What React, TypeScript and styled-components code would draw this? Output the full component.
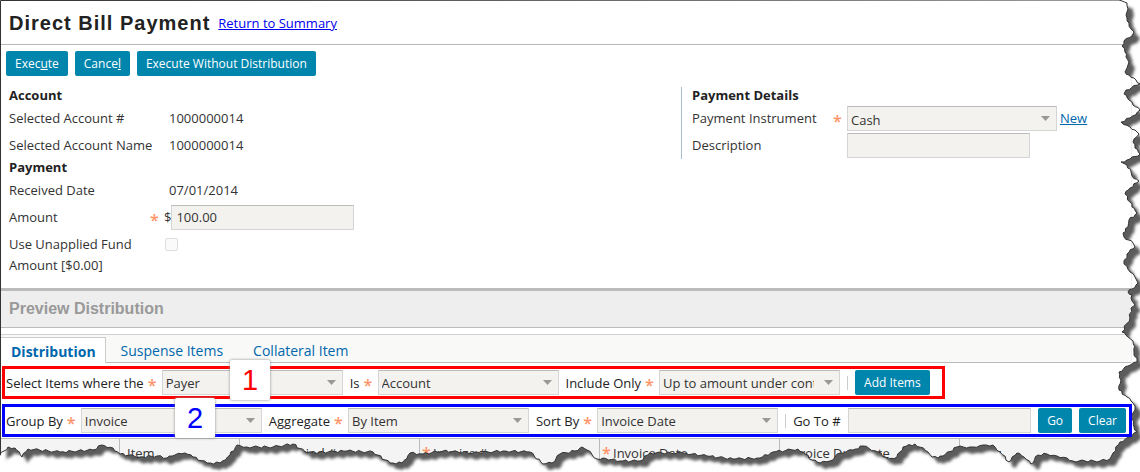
import React from 'react';
import styled, { createGlobalStyle, css } from 'styled-components';

const GlobalStyle = createGlobalStyle`
  * { box-sizing: border-box; }
  body {
    margin: 0;
    background: #fff;
    color: #333;
    font: 13px/20px "Open Sans", sans-serif;
  }
`;

const Page = styled.main`
  position: relative;
  overflow: hidden;
  padding: 1px 8px 0 1px;
`;

const Content = styled.div`
  border-right: 1px solid #eee;
`;

const Header = styled.header`
  display: flex;
  align-items: center;
  gap: 8px;
  height: 44px;
  padding-left: 8px;
  border-bottom: 1px solid #b7b7b7;
`;

const Title = styled.h1`
  margin: 0;
  font: bold 20px/24px "Liberation Sans", sans-serif;
  letter-spacing: 1px;
  color: #222;
`;

const SummaryLink = styled.a`
  color: #00e;
`;

const NewLink = styled.a`
  margin-left: 3px;
  color: #0067ac;
`;

const Actions = styled.div`
  display: flex;
  gap: 7px;
  padding: 6px 5px 11px;
`;

const Button = styled.button`
  flex: none;
  height: 25px;
  padding: 0 9px;
  border: 0;
  border-radius: 2px;
  background: #0085ad;
  color: #fff;
  font: 12px/24px "Open Sans", sans-serif;
`;

const Details = styled.div`
  display: grid;
  grid-template-columns: 680px 1fr;
  align-items: start;
  padding-bottom: 12px;
`;

const Column = styled.section<{ $divided?: boolean }>`
  ${p => p.$divided && css`
    border-left: 1px solid #a9bdd3;
  `}
  padding-left: ${p => (p.$divided ? 10 : 8)}px;
`;

const Heading = styled.h2`
  margin: 0;
  padding-bottom: 2px;
  font-size: 13px;
  line-height: 16px;
  color: #222;
`;

const Field = styled.div<{ $labelWidth: number }>`
  display: grid;
  grid-template-columns: ${p => p.$labelWidth}px 1fr;
  min-height: 27px;
  line-height: 27px;
`;

const FieldLabel = styled.label<{ $wrap?: boolean }>`
  white-space: nowrap;
  ${p => p.$wrap && css`
    width: 130px;
    line-height: 21px;
    padding-top: 3px;
    white-space: normal;
  `}
`;

const FieldName = styled.span`
  white-space: nowrap;
`;

const Value = styled.div<{ $indent?: boolean }>`
  display: flex;
  align-items: center;
  height: 27px;
  padding-left: ${p => (p.$indent ? 20 : 0)}px;
`;

const Star = styled.span`
  flex: none;
  width: 14px;
  padding-top: 5px;
  color: #ff9368;
  font-size: 16px;
  font-weight: 600;
  line-height: 16px;
`;

const control = css`
  height: 25px;
  border: 1px solid #d5d5d5;
  border-top-color: #bbb;
  border-radius: 0;
  background: #f3f2ee;
  color: #333;
  font: inherit;
  outline: 0;
`;

const TextBox = styled.input<{ $width: number }>`
  ${control}
  flex: none;
  width: ${p => p.$width}px;
  padding: 0 4px;
`;

const SelectFrame = styled.span<{ $width: number }>`
  position: relative;
  flex: none;
  display: block;
  width: ${p => p.$width}px;
  height: 25px;
`;

const Select = styled.select`
  ${control}
  display: block;
  appearance: none;
  width: 100%;
  padding: 0 25px 0 3px;
`;

const Arrow = styled.svg`
  position: absolute;
  top: 10px;
  right: 7px;
  width: 9px;
  height: 5px;
  fill: #999;
  pointer-events: none;
`;

const Tick = styled.input`
  appearance: none;
  width: 13px;
  height: 13px;
  margin: 0;
  border: 1px solid #ddd;
  border-radius: 2px;
  background: #fafafa;
`;

const Band = styled.h2`
  margin: 0 0 6px;
  height: 40px;
  padding: 2px 0 0 8px;
  border-top: 3px solid #bbb;
  border-bottom: 1px solid #bbb;
  background: #eee;
  color: #999;
  font: bold 16px/32px "Liberation Sans", sans-serif;
`;

const Tabs = styled.nav`
  display: flex;
  align-items: flex-end;
  height: 29px;
  border-top: 1px solid #d0d0d0;
  border-bottom: 1px solid #bbb;
  background: #f9f9f7;
`;

const Tab = styled.button<{ $active?: boolean }>`
  height: 26px;
  padding: 3px 15px 0;
  border: 0;
  background: none;
  color: #0067ac;
  font: 14px/23px "Open Sans", sans-serif;
  ${p => p.$active && css`
    position: relative;
    margin-bottom: -1px;
    padding: 2px 9px 0 10px;
    border: solid #ccc;
    border-width: 1px 1px 0 0;
    background: #fff;
    font-weight: bold;
  `}
`;

const Filters = styled.div`
  display: flex;
  flex-direction: column;
  gap: 5px;
  padding: 3px 0 1px 1px;
  margin-right: -1px;
`;

const FilterRow = styled.div<{ $color: string; $fit?: boolean }>`
  position: relative;
  z-index: 2;
  display: flex;
  align-items: center;
  align-self: ${p => (p.$fit ? 'flex-start' : 'stretch')};
  height: 33px;
  padding: 0 ${p => (p.$fit ? 12 : 3)}px 0 1px;
  border: 3px solid ${p => p.$color};
  white-space: nowrap;
  color: #222;
`;

const FilterItem = styled.label`
  display: flex;
  align-items: center;
  gap: 2px;
  margin-right: 7px;
`;

const FilterStar = styled(Star)`
  padding-left: 2px;
`;

const Separator = styled.span`
  width: 1px;
  height: 14px;
  margin-right: 7px;
  background: #ccc;
`;

const GoTo = styled.label`
  display: flex;
  flex: 1;
  align-items: center;
  gap: 7px;
  margin-right: 7px;
  input { flex: 1; width: 0; min-width: 0; }
`;

const ButtonPair = styled.span`
  display: flex;
  gap: 7px;
`;

const Marker = styled.span<{ $left: number; $color: string }>`
  position: absolute;
  top: -9px;
  left: ${p => p.$left}px;
  width: 40px;
  height: 40px;
  border-radius: 2px;
  background: #fff;
  box-shadow: 0 0 3px #888;
  color: ${p => p.$color};
  font: 29px/40px "Liberation Sans", sans-serif;
  text-align: center;
`;

const Table = styled.table`
  width: 100%;
  table-layout: fixed;
  border-collapse: separate;
  border-spacing: 0;
  border-top: 1px solid #bbb;
  background: #f4f4f4;
  th {
    height: 33px;
    padding: 4px 0 0 7px;
    vertical-align: top;
    text-align: left;
    font-weight: normal;
    border-left: 1px solid #bbb;
    white-space: nowrap;
  }
  th:first-child { border-left: 0; }
`;

const HeadCell = styled.span`
  display: flex;
`;

const HeadStar = styled(Star)`
  width: 11px;
  margin-left: -5px;
  padding-top: 2px;
`;

const Torn = styled.svg`
  position: absolute;
  inset: 0;
  width: 100%;
  height: 100%;
  pointer-events: none;
`;

const RIGHT_EDGE = [
  [1119, 0], [1122, 1], [1127, 3], [1127, 18], [1129, 23], [1131, 29], [1134, 32], [1132, 36], [1124, 41], [1122, 46],
  [1125, 52], [1126, 57], [1129, 62], [1127, 68], [1125, 72], [1129, 75], [1134, 78], [1140, 84], [1126, 90], [1124, 94],
  [1129, 100], [1133, 105], [1140, 110], [1130, 118], [1121, 122], [1130, 127], [1135, 130], [1139, 134], [1133, 142],
  [1135, 148], [1140, 154], [1130, 159], [1121, 162], [1127, 165], [1131, 172], [1132, 176], [1139, 181], [1130, 188],
  [1125, 194], [1130, 202], [1132, 207], [1137, 213], [1129, 220], [1128, 227], [1123, 233], [1124, 237], [1133, 243],
  [1135, 247], [1127, 254], [1124, 264], [1130, 272], [1135, 277], [1138, 283], [1132, 289], [1128, 292], [1132, 295],
  [1132, 301], [1135, 305], [1131, 308], [1130, 318], [1122, 332], [1128, 337], [1133, 341], [1134, 352], [1137, 362],
  [1128, 366], [1119, 372], [1121, 380], [1119, 390], [1127, 397], [1133, 403], [1135, 410], [1131, 416], [1134, 427],
  [1137, 432], [1130, 437], [1120, 442], [1113, 453], [1110, 459],
];

const BOTTOM_EDGE = [
  [1100, 461], [1073, 461], [1067, 458], [1057, 456], [1047, 454], [1038, 455], [1031, 464], [1024, 457], [1017, 453],
  [1009, 462], [1000, 452], [993, 445], [983, 445], [973, 447], [957, 447], [943, 456], [938, 458], [932, 457], [928, 452],
  [915, 444], [903, 447], [897, 457], [888, 459], [878, 452], [863, 446], [853, 450], [840, 453], [830, 461], [820, 463],
  [812, 460], [803, 452], [798, 449], [773, 452], [760, 458], [733, 459], [707, 456], [683, 453], [650, 453], [640, 461],
  [620, 461], [603, 458], [597, 459], [587, 450], [582, 447], [575, 451], [560, 454], [552, 463], [543, 464], [530, 452],
  [503, 451], [473, 453], [443, 451], [423, 454], [410, 453], [402, 463], [390, 463], [373, 452], [347, 451], [307, 453],
  [293, 444], [273, 447], [247, 447], [237, 445], [230, 455], [220, 463], [207, 463], [193, 457], [185, 453], [175, 455],
  [167, 458], [157, 456], [140, 457], [120, 454], [113, 448], [102, 445], [93, 450], [60, 452], [28, 449], [22, 457],
  [15, 448], [8, 447], [0, 455],
];

// Breaks each long stretch into short steps with a small repeating wobble, as torn paper has.
const WOBBLE = [1, -1, 0, 1, 0, -1, 1, 0, -1, 0];
const roughen = (points: number[][]) =>
  points
    .flatMap((point, i) => {
      const next = points[i + 1];
      if (!next) return [point];
      const dx = next[0] - point[0];
      const dy = next[1] - point[1];
      const length = Math.hypot(dx, dy);
      const steps = Math.max(1, Math.round(length / 3));
      return Array.from({ length: steps }, (_, s) => {
        const off = s ? WOBBLE[(i * 3 + s) % WOBBLE.length] : 0;
        return [point[0] + (dx * s) / steps - (dy / length) * off, point[1] + (dy * s) / steps + (dx / length) * off];
      });
    })
    .map(([x, y]) => `${x.toFixed(1)},${y.toFixed(1)}`)
    .join(' L');

const SHEET = `M0.5,0.5 L${roughen([...RIGHT_EDGE, ...BOTTOM_EDGE])} L0.5,455 Z`;

const TornEdge = () => (
  <Torn viewBox="0 0 1140 472" preserveAspectRatio="none" aria-hidden="true">
    <defs>
      <mask id="outside" maskUnits="userSpaceOnUse" x="0" y="0" width="1140" height="472">
        <rect width="1140" height="472" fill="#fff" />
        <path d={SHEET} fill="#000" />
      </mask>
      <filter id="soften" x="-5%" y="-5%" width="110%" height="110%">
        <feGaussianBlur stdDeviation="1.5" />
      </filter>
    </defs>
    <g mask="url(#outside)">
      <rect width="1140" height="472" fill="#fff" />
      <path d={SHEET} transform="translate(6 6)" fill="#5c5c5c" filter="url(#soften)" />
    </g>
    <path d={SHEET} fill="none" stroke="#333" strokeWidth="1" />
  </Torn>
);

const Dropdown = ({ id, value, width }: { id: string; value: string; width: number }) => (
  <SelectFrame $width={width}>
    <Select id={id} defaultValue={value}>
      <option>{value}</option>
    </Select>
    <Arrow viewBox="0 0 9 5"><path d="M0 0H9L4.5 5Z" /></Arrow>
  </SelectFrame>
);

const Filter = ({ id, label, value }: { id: string; label: string; value: string }) => (
  <FilterItem htmlFor={id}>
    <span>{label}</span>
    <FilterStar>*</FilterStar>
    <Dropdown id={id} value={value} width={181} />
  </FilterItem>
);

const COLUMNS = [
  { label: '', width: 118 },
  { label: 'Item', width: 120 },
  { label: 'Policy Period #', width: 180 },
  { label: 'Invoice #', width: 180, required: true },
  { label: 'Invoice Date', width: 180, required: true },
  { label: 'Invoice Due Date', width: 180 },
  { label: 'Payer' },
];

export default function App() {
  return (
    <>
      <GlobalStyle />
      <Page>
        <Content>
          <Header>
            <Title>Direct Bill Payment</Title>
            <SummaryLink href="#summary">Return to Summary</SummaryLink>
          </Header>
          <Actions>
            <Button>Exec<u>u</u>te</Button>
            <Button>Cance<u>l</u></Button>
            <Button>Execute Without Distribution</Button>
          </Actions>
          <Details>
            <Column>
              <Heading>Account</Heading>
              <Field $labelWidth={140}>
                <FieldName>Selected Account #</FieldName>
                <Value $indent>1000000014</Value>
              </Field>
              <Field $labelWidth={140}>
                <FieldName>Selected Account Name</FieldName>
                <Value $indent>1000000014</Value>
              </Field>
              <Heading>Payment</Heading>
              <Field $labelWidth={140}>
                <FieldName>Received Date</FieldName>
                <Value $indent>07/01/2014</Value>
              </Field>
              <Field $labelWidth={141}>
                <FieldLabel htmlFor="amount">Amount</FieldLabel>
                <Value><Star>*</Star>$<TextBox id="amount" $width={183} defaultValue="100.00" /></Value>
              </Field>
              <Field $labelWidth={136}>
                <FieldLabel htmlFor="unapplied" $wrap>Use Unapplied Fund Amount [$0.00]</FieldLabel>
                <Value $indent><Tick id="unapplied" type="checkbox" /></Value>
              </Field>
            </Column>
            <Column $divided>
              <Heading>Payment Details</Heading>
              <Field $labelWidth={141}>
                <FieldLabel htmlFor="instrument">Payment Instrument</FieldLabel>
                <Value>
                  <Star>*</Star>
                  <Dropdown id="instrument" value="Cash" width={210} />
                  <NewLink href="#new">New</NewLink>
                </Value>
              </Field>
              <Field $labelWidth={155}>
                <FieldLabel htmlFor="description">Description</FieldLabel>
                <Value><TextBox id="description" $width={183} /></Value>
              </Field>
            </Column>
          </Details>
          <Band>Preview Distribution</Band>
          <Tabs>
            <Tab $active>Distribution</Tab>
            <Tab>Suspense Items</Tab>
            <Tab>Collateral Item</Tab>
          </Tabs>
          <Filters>
            <FilterRow $color="red" $fit>
              <Filter id="where" label="Select Items where the" value="Payer" />
              <Filter id="is" label="Is" value="Account" />
              <Filter id="include" label="Include Only" value="Up to amount under contract" />
              <Separator />
              <Button>Add Items</Button>
              <Marker $left={225} $color="red">1</Marker>
            </FilterRow>
            <FilterRow $color="blue">
              <Filter id="group" label="Group By" value="Invoice" />
              <Filter id="aggregate" label="Aggregate" value="By Item" />
              <Filter id="sort" label="Sort By" value="Invoice Date" />
              <Separator />
              <GoTo>Go To #<TextBox $width={183} /></GoTo>
              <ButtonPair>
                <Button>Go</Button>
                <Button>Clear</Button>
              </ButtonPair>
              <Marker $left={170} $color="blue">2</Marker>
            </FilterRow>
          </Filters>
          <Table>
            <colgroup>
              {COLUMNS.map(c => <col key={c.label} width={c.width} />)}
            </colgroup>
            <thead>
              <tr>
                {COLUMNS.map(c => (
                  <th key={c.label} scope="col">
                    <HeadCell>{c.required && <HeadStar>*</HeadStar>}{c.label}</HeadCell>
                  </th>
                ))}
              </tr>
            </thead>
          </Table>
        </Content>
        <TornEdge />
      </Page>
    </>
  );
}
